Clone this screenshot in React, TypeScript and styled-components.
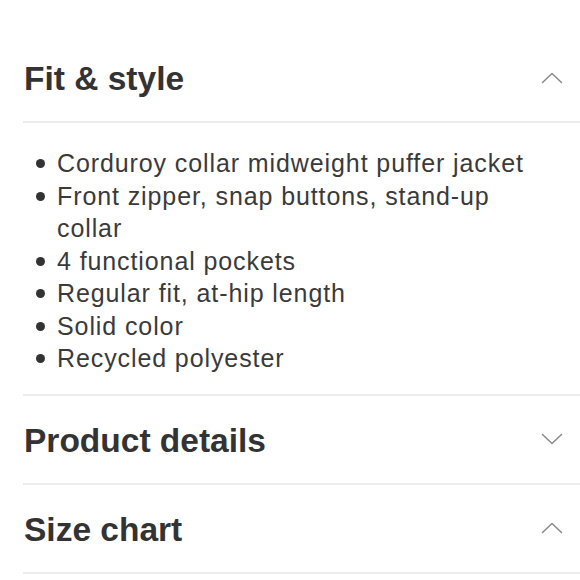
import { useState } from "react";
import styled, { createGlobalStyle } from "styled-components";

const GlobalStyle = createGlobalStyle`
  html, body {
    margin: 0;
    padding: 0;
    background: #fff;
  }
  body {
    font-family: "Liberation Sans", Arial, Helvetica, sans-serif;
    color: #333;
    -webkit-font-smoothing: antialiased;
  }
`;

const Page = styled.div`
  width: 580px;
  padding: 34px 0 0 23px;
  box-sizing: border-box;
`;

const Section = styled.section`
  display: flex;
  flex-direction: column;
`;

const Header = styled.button`
  display: flex;
  align-items: center;
  justify-content: space-between;
  box-sizing: border-box;
  height: 89px;
  padding: 0 17px 0 1px;
  border: none;
  border-bottom: 2px solid #ececec;
  background: transparent;
  cursor: pointer;
  text-align: left;
  font: inherit;
  color: inherit;
`;

const Title = styled.h2`
  margin: 0;
  font-size: 33.5px;
  font-weight: 700;
  line-height: 1;
  color: #333;
  padding-top: 3px;
`;

const Panel = styled.div`
  padding: 24px 40px 19px 0;
  border-bottom: 2px solid #ececec;
`;

const List = styled.ul`
  margin: 0;
  padding: 0;
  list-style: none;
`;

const Item = styled.li`
  position: relative;
  padding-left: 34px;
  font-size: 25px;
  letter-spacing: 0.9px;
  line-height: 32.5px;
  color: #3a3a3a;

  &::before {
    content: "";
    position: absolute;
    left: 13px;
    top: 12px;
    width: 9px;
    height: 9px;
    border-radius: 50%;
    background: #333;
  }
`;

const Chevron = ({ open }: { open: boolean }) => (
  <svg width="22" height="12" viewBox="0 0 22 12" fill="none">
    <polyline
      points={open ? "1.5,10.5 11,1.5 20.5,10.5" : "1.5,1.5 11,10.5 20.5,1.5"}
      stroke="#8a8a8a"
      strokeWidth="1.5"
      strokeLinecap="round"
      strokeLinejoin="round"
    />
  </svg>
);

const FIT_STYLE = [
  "Corduroy collar midweight puffer jacket",
  "Front zipper, snap buttons, stand-up collar",
  "4 functional pockets",
  "Regular fit, at-hip length",
  "Solid color",
  "Recycled polyester",
];

type AccordionProps = {
  title: string;
  items?: string[];
  defaultOpen?: boolean;
};

const Accordion = ({ title, items, defaultOpen = false }: AccordionProps) => {
  const [open, setOpen] = useState(defaultOpen);

  return (
    <Section>
      <Header onClick={() => setOpen(!open)}>
        <Title>{title}</Title>
        <Chevron open={open} />
      </Header>
      {open && items && items.length > 0 && (
        <Panel>
          <List>
            {items.map((item) => (
              <Item key={item}>{item}</Item>
            ))}
          </List>
        </Panel>
      )}
    </Section>
  );
};

export default function App() {
  return (
    <>
      <GlobalStyle />
      <Page>
        <Accordion title="Fit & style" items={FIT_STYLE} defaultOpen />
        <Accordion title="Product details" />
        <Accordion title="Size chart" defaultOpen />
      </Page>
    </>
  );
}
